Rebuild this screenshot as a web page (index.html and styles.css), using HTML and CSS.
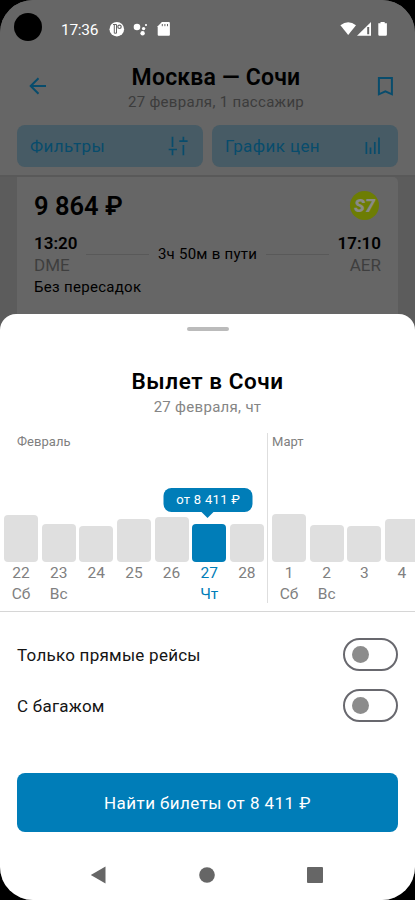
FILE: index.html
```html
<!DOCTYPE html>
<html lang="ru">
<head>
<meta charset="utf-8">
<title>Москва — Сочи</title>
<link rel="stylesheet" href="styles.css">
</head>
<body>
<div class="phone">
  <div class="backdrop">
    <div class="status">
      <span class="camera"></span>
      <span class="clock">17:36</span>
      <svg class="status-left" width="62" height="16" viewBox="0 0 62 16">
        <circle cx="7.8" cy="8.2" r="7.3" fill="#fff"/>
        <path d="M4 3.500h3.500v8.700H5.300V3.500" fill="none" stroke="#666" stroke-width="1"/>
        <circle cx="10.500" cy="5.800" r="1.700" fill="none" stroke="#666" stroke-width="1.200"/>
        <g fill="#fff"><circle cx="28" cy="6" r="3.3"/><circle cx="34.6" cy="7.6" r="1.7"/><circle cx="33.6" cy="12.3" r="2.2"/><circle cx="37" cy="4" r="1.1"/></g>
        <path d="M52.900 1h7q1 0 1 1v11.800q0 1-1 1H49.700q-1 0-1-1V5.200z" fill="#fff"/>
        <path d="M53.300 3v2.200M55.900 3v2.200M58.500 3v2.200" stroke="#666"/>
      </svg>
      <svg class="status-right" width="49" height="16" viewBox="0 0 49 16">
        <path d="M.4 4.2Q8.2-1.8 16 4.2L8.2 14z" fill="#fff"/>
        <path d="M17 14.7L31 1v13.7z" fill="#fff"/><path d="M28.200 6v7.3" stroke="#666" stroke-width="2"/>
        <path d="M40.5 1h4.2v1.3h2.2v11.2q0 1.2-1.2 1.2h-6.2q-1.2 0-1.2-1.2V2.3h2.2z" fill="#fff"/>
      </svg>
    </div>
    <header class="header">
      <svg width="20" height="20" viewBox="0 0 20 20" class="line-icon"><path d="M18 10H3M10.500 2.2L2.7 10l7.8 7.8"/></svg>
      <div class="heading">
        <h1>Москва — Сочи</h1>
        <p>27 февраля, 1 пассажир</p>
      </div>
      <svg width="20" height="22" viewBox="0 0 20 22" class="line-icon"><path d="M3.9 2h13v16.300l-6.5-2.900-6.5 2.900z"/></svg>
    </header>
    <div class="chips">
      <div class="chip"><span>Фильтры</span>
        <svg width="20" height="22" viewBox="0 0 20 22" class="line-icon thin"><path d="M4.5 1.700v10.300M.7 14.500h8.300M4.500 14.500v5.800M15.400 1.700v4.500M11.300 6.200h8.300M15.400 10v10.300"/></svg>
      </div>
      <div class="chip"><span>График цен</span>
        <svg width="20" height="22" viewBox="0 0 20 22" class="line-icon thin"><path d="M3.400 7v12M7.500 12.500V19M11.800 7v12M16 2.500V19"/></svg>
      </div>
    </div>
    <div class="results">
      <article class="ticket">
        <div class="ticket-top"><strong class="price">9 864 ₽</strong><span class="airline">S7</span></div>
        <div class="route">
          <div class="stop"><b>13:20</b><span>DME</span></div>
          <i class="rule"></i><span class="duration">3ч 50м в пути</span><i class="rule"></i>
          <div class="stop end"><b>17:10</b><span>AER</span></div>
        </div>
        <p class="transfers">Без пересадок</p>
      </article>
    </div>
  </div>

  <section class="sheet">
    <div class="handle"></div>
    <h2>Вылет в Сочи</h2>
    <p class="date">27 февраля, чт</p>
    <div class="calendar">
      <div class="month feb">
        <p class="month-name">Февраль</p>
        <div class="days">
          <div class="day"><i class="bar h47"></i><span>22</span><span>Сб</span></div>
          <div class="day"><i class="bar h38"></i><span>23</span><span>Вс</span></div>
          <div class="day"><i class="bar h36"></i><span>24</span><span></span></div>
          <div class="day"><i class="bar h43"></i><span>25</span><span></span></div>
          <div class="day"><i class="bar h45"></i><span>26</span><span></span></div>
          <div class="day selected"><em class="tip">от 8 411 ₽</em><i class="bar h38"></i><span>27</span><span>Чт</span></div>
          <div class="day"><i class="bar h38"></i><span>28</span><span></span></div>
        </div>
      </div>
      <div class="month march">
        <p class="month-name">Март</p>
        <div class="days">
          <div class="day"><i class="bar h48"></i><span>1</span><span>Сб</span></div>
          <div class="day"><i class="bar h37"></i><span>2</span><span>Вс</span></div>
          <div class="day"><i class="bar h36"></i><span>3</span><span></span></div>
          <div class="day"><i class="bar h43"></i><span>4</span><span></span></div>
        </div>
      </div>
    </div>
    <div class="options">
      <div class="option"><span>Только прямые рейсы</span><span class="switch"></span></div>
      <div class="option"><span>С багажом</span><span class="switch"></span></div>
    </div>
    <div class="submit"><span>Найти билеты от 8 411 ₽</span></div>
    <nav class="nav">
      <svg width="16" height="18" viewBox="0 0 16 18"><path d="M15.500.500v17L.8 9z"/></svg>
      <svg width="16" height="18" viewBox="0 0 16 18"><circle cx="8" cy="9" r="7.8"/></svg>
      <svg width="16" height="18" viewBox="0 0 16 18"><rect y="1" width="16" height="16" rx="1"/></svg>
    </nav>
  </section>
</div>
</body>
</html>
```

FILE: styles.css
```css
* { box-sizing: border-box; margin: 0; padding: 0; }
html, body { background: #000; }
body { font-family: Roboto, "Liberation Sans", sans-serif; width: 415px; height: 900px; overflow: hidden; }
.phone { height: 900px; border-radius: 33px; overflow: hidden; background: #5c5c5c; display: flex; flex-direction: column; white-space: nowrap; }
.backdrop { height: 314px; flex: none; }
svg { flex: none; display: block; }

.status { height: 58px; background: #666; display: flex; align-items: flex-start; padding-left: 14px; color: #fff; }
.camera { width: 28px; height: 28px; border-radius: 50%; background: #000; margin-top: 13px; }
.clock { font-size: 15.5px; line-height: 20px; margin: 20px 0 0 19px; width: 48px; letter-spacing: -.3px; }
.status-left { margin-top: 21px; }
.status-right { margin: 21px 26px 0 auto; }

.header { height: 67px; background: #666; display: flex; justify-content: space-between; padding: 0 20px 0 28px; }
.header > svg { margin-top: 18px; }
.line-icon { fill: none; stroke: #084c6c; stroke-width: 2; }
.thin { stroke-width: 1.7; }
.heading { text-align: center; padding-top: 5px; margin-left: 9px; }
.heading h1 { font-size: 23px; line-height: 29px; font-weight: 600; letter-spacing: .2px; }
.heading p { font-size: 15px; line-height: 21px; letter-spacing: .3px; color: #3c3c3c; }

.chips { height: 52px; background: #666; border-bottom: 2px solid #595959; display: flex; gap: 9px; padding: 0 17px; }
.chip { flex: 1; height: 42px; border-radius: 8px; background: #475b65; color: #084c6c; font-size: 17px; line-height: 42px; letter-spacing: .4px; display: flex; align-items: center; justify-content: space-between; padding: 0 15px 0 13px; }

.results { padding: 0 17px; }
.ticket { background: #666; height: 137px; padding: 13px 17px 0; border-radius: 0 5px 0 0; }
.ticket-top { display: flex; justify-content: space-between; height: 42px; }
.price { font-size: 25.5px; line-height: 32px; font-weight: 600; }
.airline { width: 29px; height: 29px; border-radius: 50%; background: #6d7d04; color: #8a8a86; font: italic 900 18px/29px Roboto, sans-serif; text-align: center; margin: 1px 2px 0 0; }
.route { display: flex; align-items: center; height: 44px; }
.stop { font-size: 17px; line-height: 22px; }
.stop b, .stop span { display: block; }
.stop b { font-weight: 600; }
.stop span { color: #3e3e3e; }
.end { text-align: right; }
.rule { height: 1px; background: #595959; flex: 1; margin: 0 9px; }
.duration { font-size: 15px; letter-spacing: .25px; }
.transfers { font-size: 15px; line-height: 22px; letter-spacing: .3px; }

.sheet { height: 586px; flex: none; background: #fff; border-radius: 16px 16px 0 0; display: flex; flex-direction: column; }
.handle { width: 42px; height: 4px; border-radius: 2px; background: #bbb; margin: 12.5px auto 0; }
h2 { text-align: center; font-size: 22.5px; line-height: 30px; font-weight: 600; letter-spacing: .55px; margin-top: 35.5px; }
.date { text-align: center; color: #858585; font-size: 15px; height: 20px; line-height: 22px; letter-spacing: .3px; }

.calendar { height: 196px; display: flex; border-bottom: 1px solid #d6d6d6; padding-top: 17px; overflow: hidden; }
.month { height: 170px; flex: none; }
.march { border-left: 1px solid #dedede; padding-left: 4px; }
.feb { width: 267px; padding-left: 4px; }
.month-name { font-size: 13px; line-height: 18px; height: 16px; letter-spacing: .05px; color: #808080; }
.feb .month-name { padding-left: 13px; }
.days { display: flex; gap: 3.65px; height: 154px; align-items: flex-end; }
.day { width: 34px; display: flex; flex-direction: column; align-items: center; position: relative; color: #808080; font-size: 15.5px; line-height: 23px; }
.day span { height: 20.5px; }
.bar { width: 34px; background: #dfdfdf; border-radius: 4px; }
.h36 { height: 36px; } .h37 { height: 37px; } .h38 { height: 38.5px; } .h43 { height: 43.5px; }
.h45 { height: 45px; } .h47 { height: 47px; } .h48 { height: 48px; }
.selected { color: #007db8; }
.selected .bar { background: #007db8; }
.tip { position: absolute; bottom: 91.5px; left: 50%; transform: translateX(-50%); width: 89px; height: 24px; margin-left: -1px; border-radius: 8px; background: #007db8; color: #fff; font-style: normal; font-weight: 450; font-size: 13px; line-height: 24px; text-align: center; letter-spacing: .3px; }
.tip::after { content: ""; position: absolute; left: 37px; top: 23px; border: 7px solid transparent; border-top-color: #007db8; border-bottom: 0; }

.options { padding: 25px 17px 0; display: flex; flex-direction: column; gap: 17px; }
.option { height: 34px; display: flex; align-items: center; justify-content: space-between; font-size: 17px; letter-spacing: .25px; color: #151515; }
.option > span:first-child { padding-top: 2px; }
.switch { width: 55px; height: 33px; border: 2px solid #68686e; border-radius: 17px; display: flex; align-items: center; padding-left: 6.5px; }
.switch::before { content: ""; width: 17px; height: 17px; border-radius: 50%; background: #8c8c8c; }
.submit { margin: 51px 17px 0; height: 59px; border-radius: 8px; background: #007db8; color: #fff; display: flex; align-items: center; justify-content: center; font-size: 17px; font-weight: 450; letter-spacing: .45px; padding-top: 1px; }
.nav { display: flex; justify-content: space-between; padding: 0 92px 0 90px; margin-top: 33.5px; fill: #666; }
```
